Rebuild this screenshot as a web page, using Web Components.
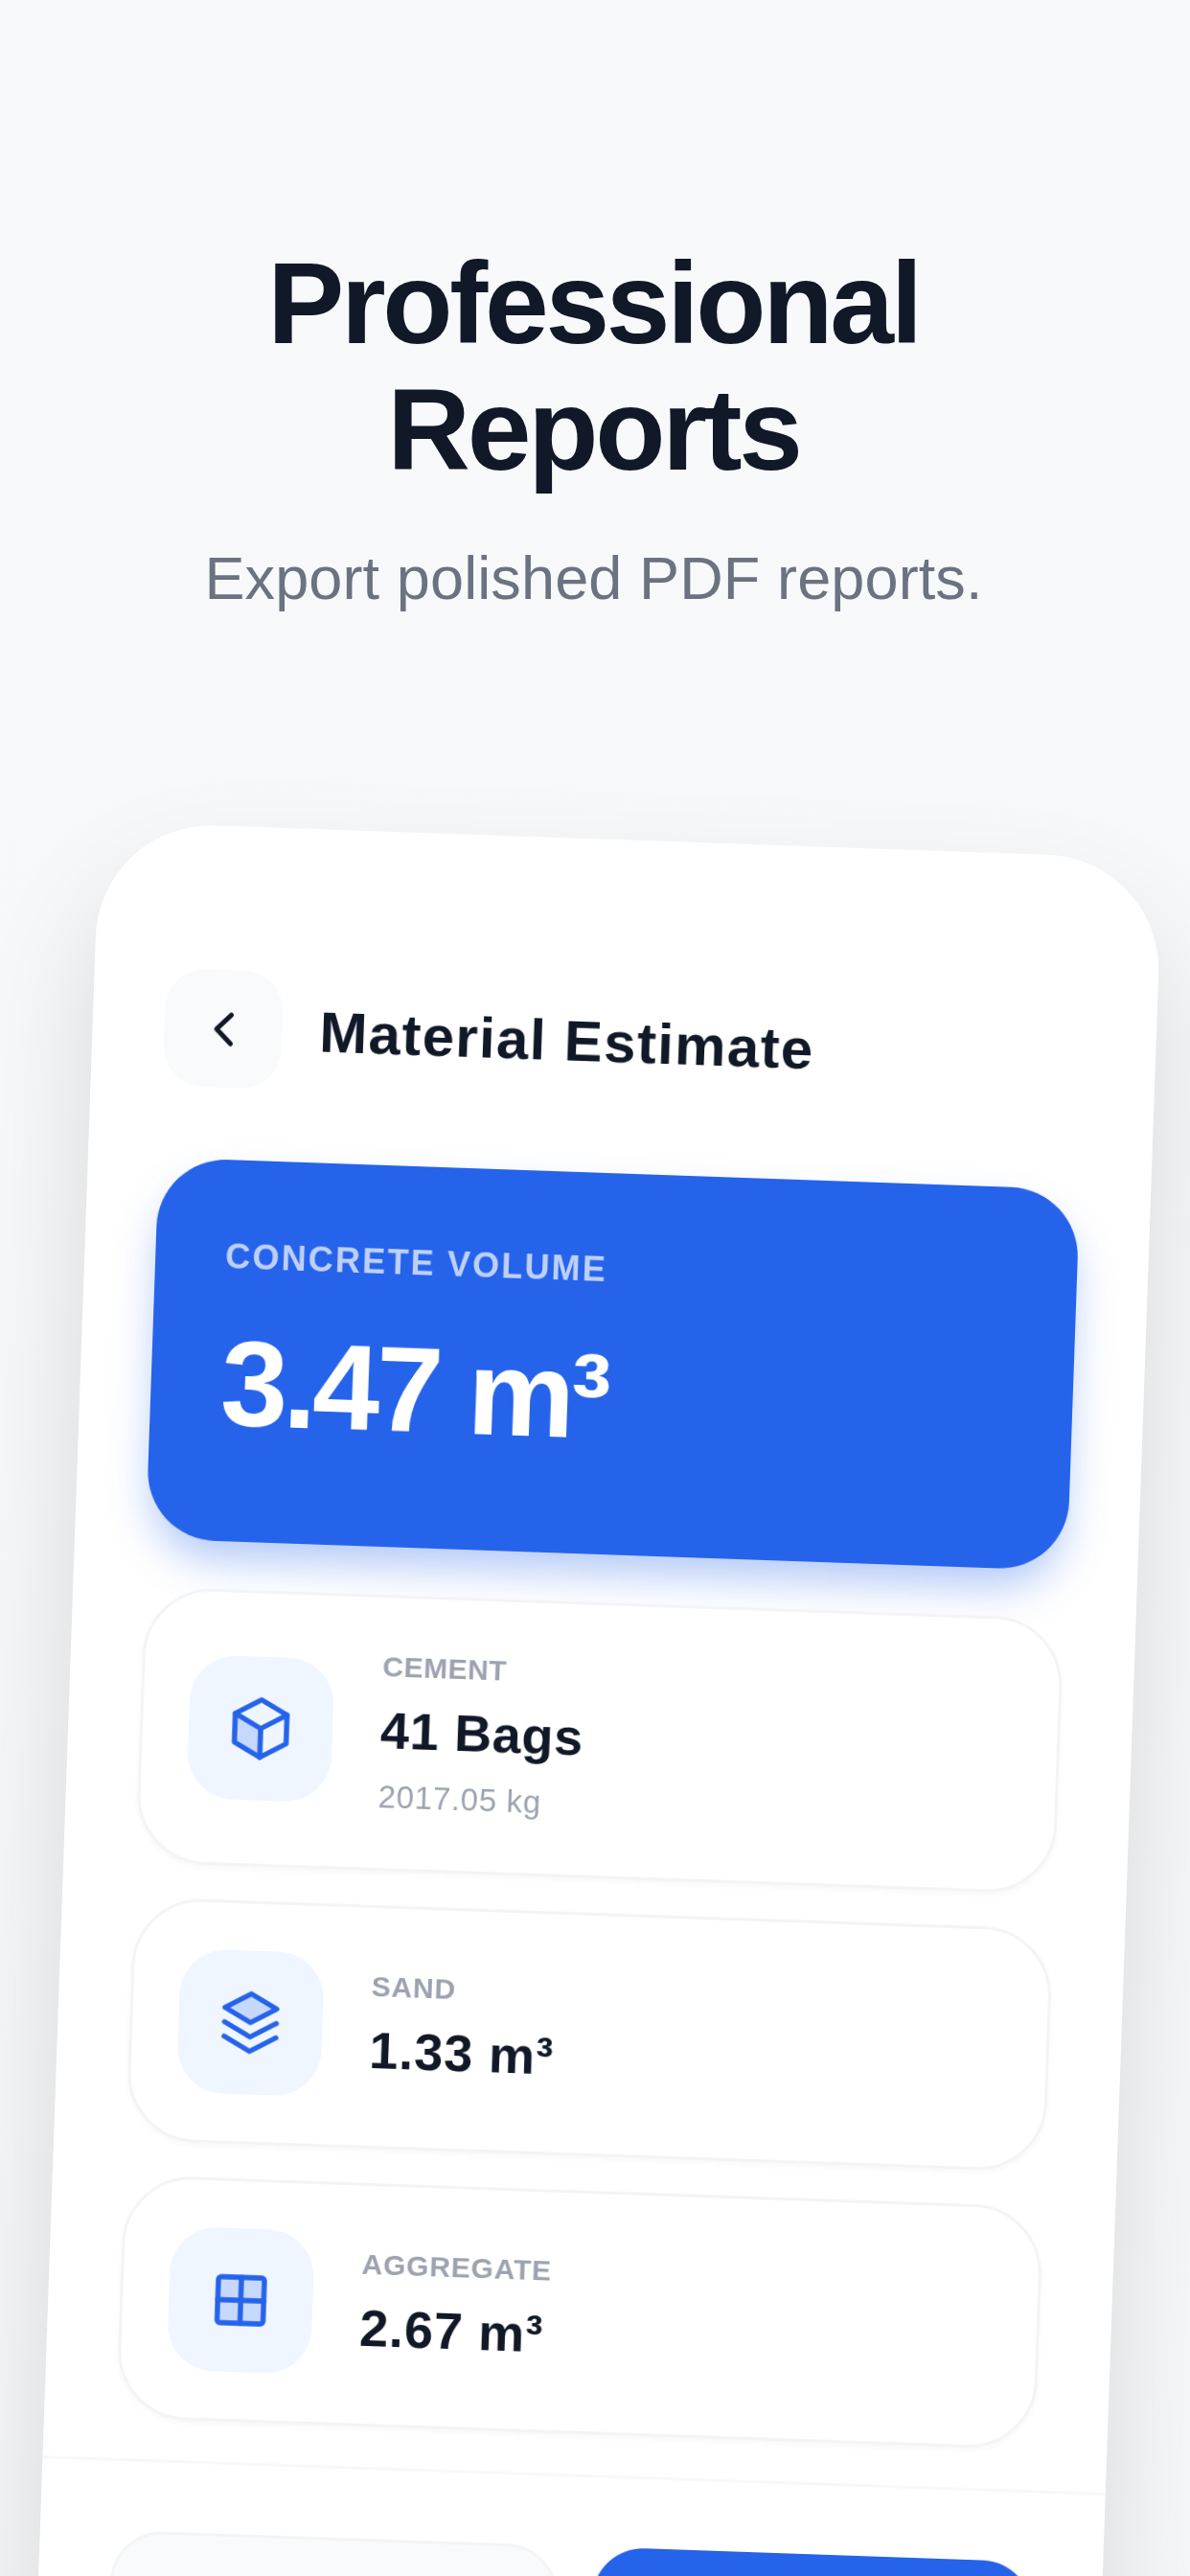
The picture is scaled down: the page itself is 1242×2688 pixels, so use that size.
<!DOCTYPE html>
<html lang="en"><head><meta charset="utf-8"><title>Professional Reports</title>
<style>
html,body{margin:0;padding:0;background:#F8F9FB;overflow:hidden;height:2688px}
body{font-family:"Liberation Sans",Arial,sans-serif;line-height:1.5;color:#111827}
</style></head><body>
<report-screen>
  <intro-block slot="intro" heading="Professional Reports" sub="Export polished PDF reports."></intro-block>
  <phone-frame slot="phone">
    <estimate-bar>Material Estimate</estimate-bar>
    <volume-card label="CONCRETE VOLUME" value="3.47 m³"></volume-card>
    <material-row label="CEMENT" value="41 Bags" sub="2017.05 kg" vs="0.7" ls="0.5">
      <svg slot="icon" width="72" height="72" viewBox="0 0 24 24" fill="none" stroke="#2563EB" stroke-width="1.8" stroke-linejoin="round" stroke-linecap="round"><path d="M3 7L12 12V22L3 17Z" fill="#2563EB" fill-opacity=".2" stroke="none"/><path d="M12 2L21 7V17L12 22L3 17V7Z"/><path d="M3 7L12 12L21 7M12 12V22"/></svg>
    </material-row>
    <material-row label="SAND" value="1.33 m³" vs="0.95" ls="0.8">
      <svg slot="icon" width="72" height="72" viewBox="0 0 24 24" fill="none" stroke="#2563EB" stroke-width="1.8" stroke-linejoin="round" stroke-linecap="round"><path d="M12 2L21 7L12 12L3 7Z" fill="#2563EB" fill-opacity=".2"/><path d="M3 12L12 17L21 12M3 17L12 22L21 17"/></svg>
    </material-row>
    <material-row label="AGGREGATE" value="2.67 m³" vs="0.8" ls="0.8">
      <svg slot="icon" width="72" height="72" viewBox="0 0 24 24" fill="none" stroke="#2563EB" stroke-width="1.8" stroke-linejoin="round" stroke-linecap="round"><rect x="4" y="4" width="16" height="16" rx="1" fill="#2563EB" fill-opacity=".2"/><path d="M12 4V20M4 12H20"/></svg>
    </material-row>
    <action-bar slot="footer"></action-bar>
  </phone-frame>
</report-screen>
<script>
function def(name, css, html, init){
  customElements.define(name, class extends HTMLElement{
    constructor(){super();const r=this.attachShadow({mode:'open'});
      const t=document.createElement('template');
      t.innerHTML='<style>'+css+'</style>'+(typeof html==='function'?html(this):html);
      r.appendChild(t.content.cloneNode(true));}
    connectedCallback(){if(init)init(this,this.shadowRoot);}
  });
}
def('report-screen',
  ':host{display:flex;flex-direction:column;align-items:center;width:1242px;height:2688px;overflow:hidden;background:linear-gradient(180deg,#F8F9FB 0%,#F6F7F9 100%)}',
  '<slot name="intro"></slot><slot name="phone"></slot>');
def('intro-block',
  ':host{display:block;box-sizing:border-box;width:1242px;padding:250px 99px 0 96px;text-align:center}'+
  'h1{margin:0;font:700 120px/132px "Liberation Sans",Arial,sans-serif;letter-spacing:-3.3px;color:#111827;white-space:pre-line}'+
  'p{margin:44px 0 0;font:400 63px/90px "Liberation Sans",Arial,sans-serif;letter-spacing:.12px;color:#6B7280}',
  '<h1></h1><p></p>',
  (h,r)=>{r.querySelector('h1').textContent=h.getAttribute('heading').replace(' ','\n');r.querySelector('p').textContent=h.getAttribute('sub');});
def('phone-frame',
  ':host{display:flex;flex-direction:column;flex:none;box-sizing:border-box;width:1110px;height:2160px;margin-top:228px;background:#fff;border-radius:120px;transform:rotate(2deg);box-shadow:0 60px 120px rgba(0,0,0,.13);overflow:hidden}'+
  '.soft{display:flex;flex-direction:column;height:100%;filter:blur(.55px)}'+
  '.body{display:flex;flex-direction:column;padding:150px 75px 0}',
  '<div class="soft"><div class="body"><slot></slot></div><slot name="footer"></slot></div>');
def('estimate-bar',
  ':host{display:flex;align-items:center;gap:39px;margin-bottom:75px}'+
  '.b{width:123px;height:123px;border-radius:42px;background:#F9FAFB;display:flex;align-items:center;justify-content:center;flex:none}'+
  '.t{font:700 60px/90px "Liberation Sans",Arial,sans-serif;letter-spacing:1.35px;color:#111827}',
  '<div class="b"><svg width="60" height="60" viewBox="0 0 24 24" fill="none" stroke="#111827" stroke-width="2" stroke-linecap="round" stroke-linejoin="round"><path d="M15 18L9 12L15 6"/></svg></div><div class="t"><slot></slot></div>');
def('volume-card',
  ':host{display:block;box-sizing:border-box;height:398px;padding:74px 73px;margin:0 -1px 50px;border-radius:72px;background:#2563EB;box-shadow:0 24px 45px -6px rgba(37,99,235,.36);color:#fff}'+
  '.l{font:700 36px/54px "Liberation Sans",Arial,sans-serif;letter-spacing:2.2px;color:rgba(255,255,255,.7);margin-bottom:16px}'+
  '.v{font:700 126px/180px "Liberation Sans",Arial,sans-serif;letter-spacing:-4.5px}',
  h=>`<div class="l">${h.getAttribute('label')}</div><div class="v">${h.getAttribute('value')}</div>`);
def('material-row',
  ':host{display:flex;align-items:center;gap:50px;box-sizing:border-box;padding:49px 48px;margin-bottom:36px;background:#fff;border:3px solid #F3F4F6;border-radius:72px;box-shadow:0 3px 6px rgba(0,0,0,.03)}'+
  '.i{width:150px;height:150px;flex:none;border-radius:48px;background:#EFF6FF;display:flex;align-items:center;justify-content:center}'+
  '.t{display:flex;flex-direction:column;gap:4px}'+
  '.l{font:700 30px/45px "Liberation Sans",Arial,sans-serif;color:#9CA3AF}'+
  '.v{font:700 54px/81px "Liberation Sans",Arial,sans-serif;color:#111827}'+
  '.s{font:400 33px/49.5px "Liberation Sans",Arial,sans-serif;letter-spacing:.7px;color:#9CA3AF}',
  h=>`<div class="i"><slot name="icon"></slot></div><div class="t"><div class="l" style="letter-spacing:${h.getAttribute('ls')}px">${h.getAttribute('label')}</div><div class="v" style="letter-spacing:${h.getAttribute('vs')}px">${h.getAttribute('value')}</div>${h.hasAttribute('sub')?`<div class="s">${h.getAttribute('sub')}</div>`:''}</div>`);
def('action-bar',
  ':host{display:flex;gap:36px;margin-top:6px;padding:72px 72px 72px 75px;border-top:3px solid #F7F8F9}'+
  '.a,.c{flex:1;height:168px;box-sizing:border-box;border-radius:54px}'+
  '.a{background:#F9FAFB;border:3px solid #F3F4F6}.c{background:#2563EB}',
  '<div class="a"></div><div class="c"></div>');
</script>
</body></html>
